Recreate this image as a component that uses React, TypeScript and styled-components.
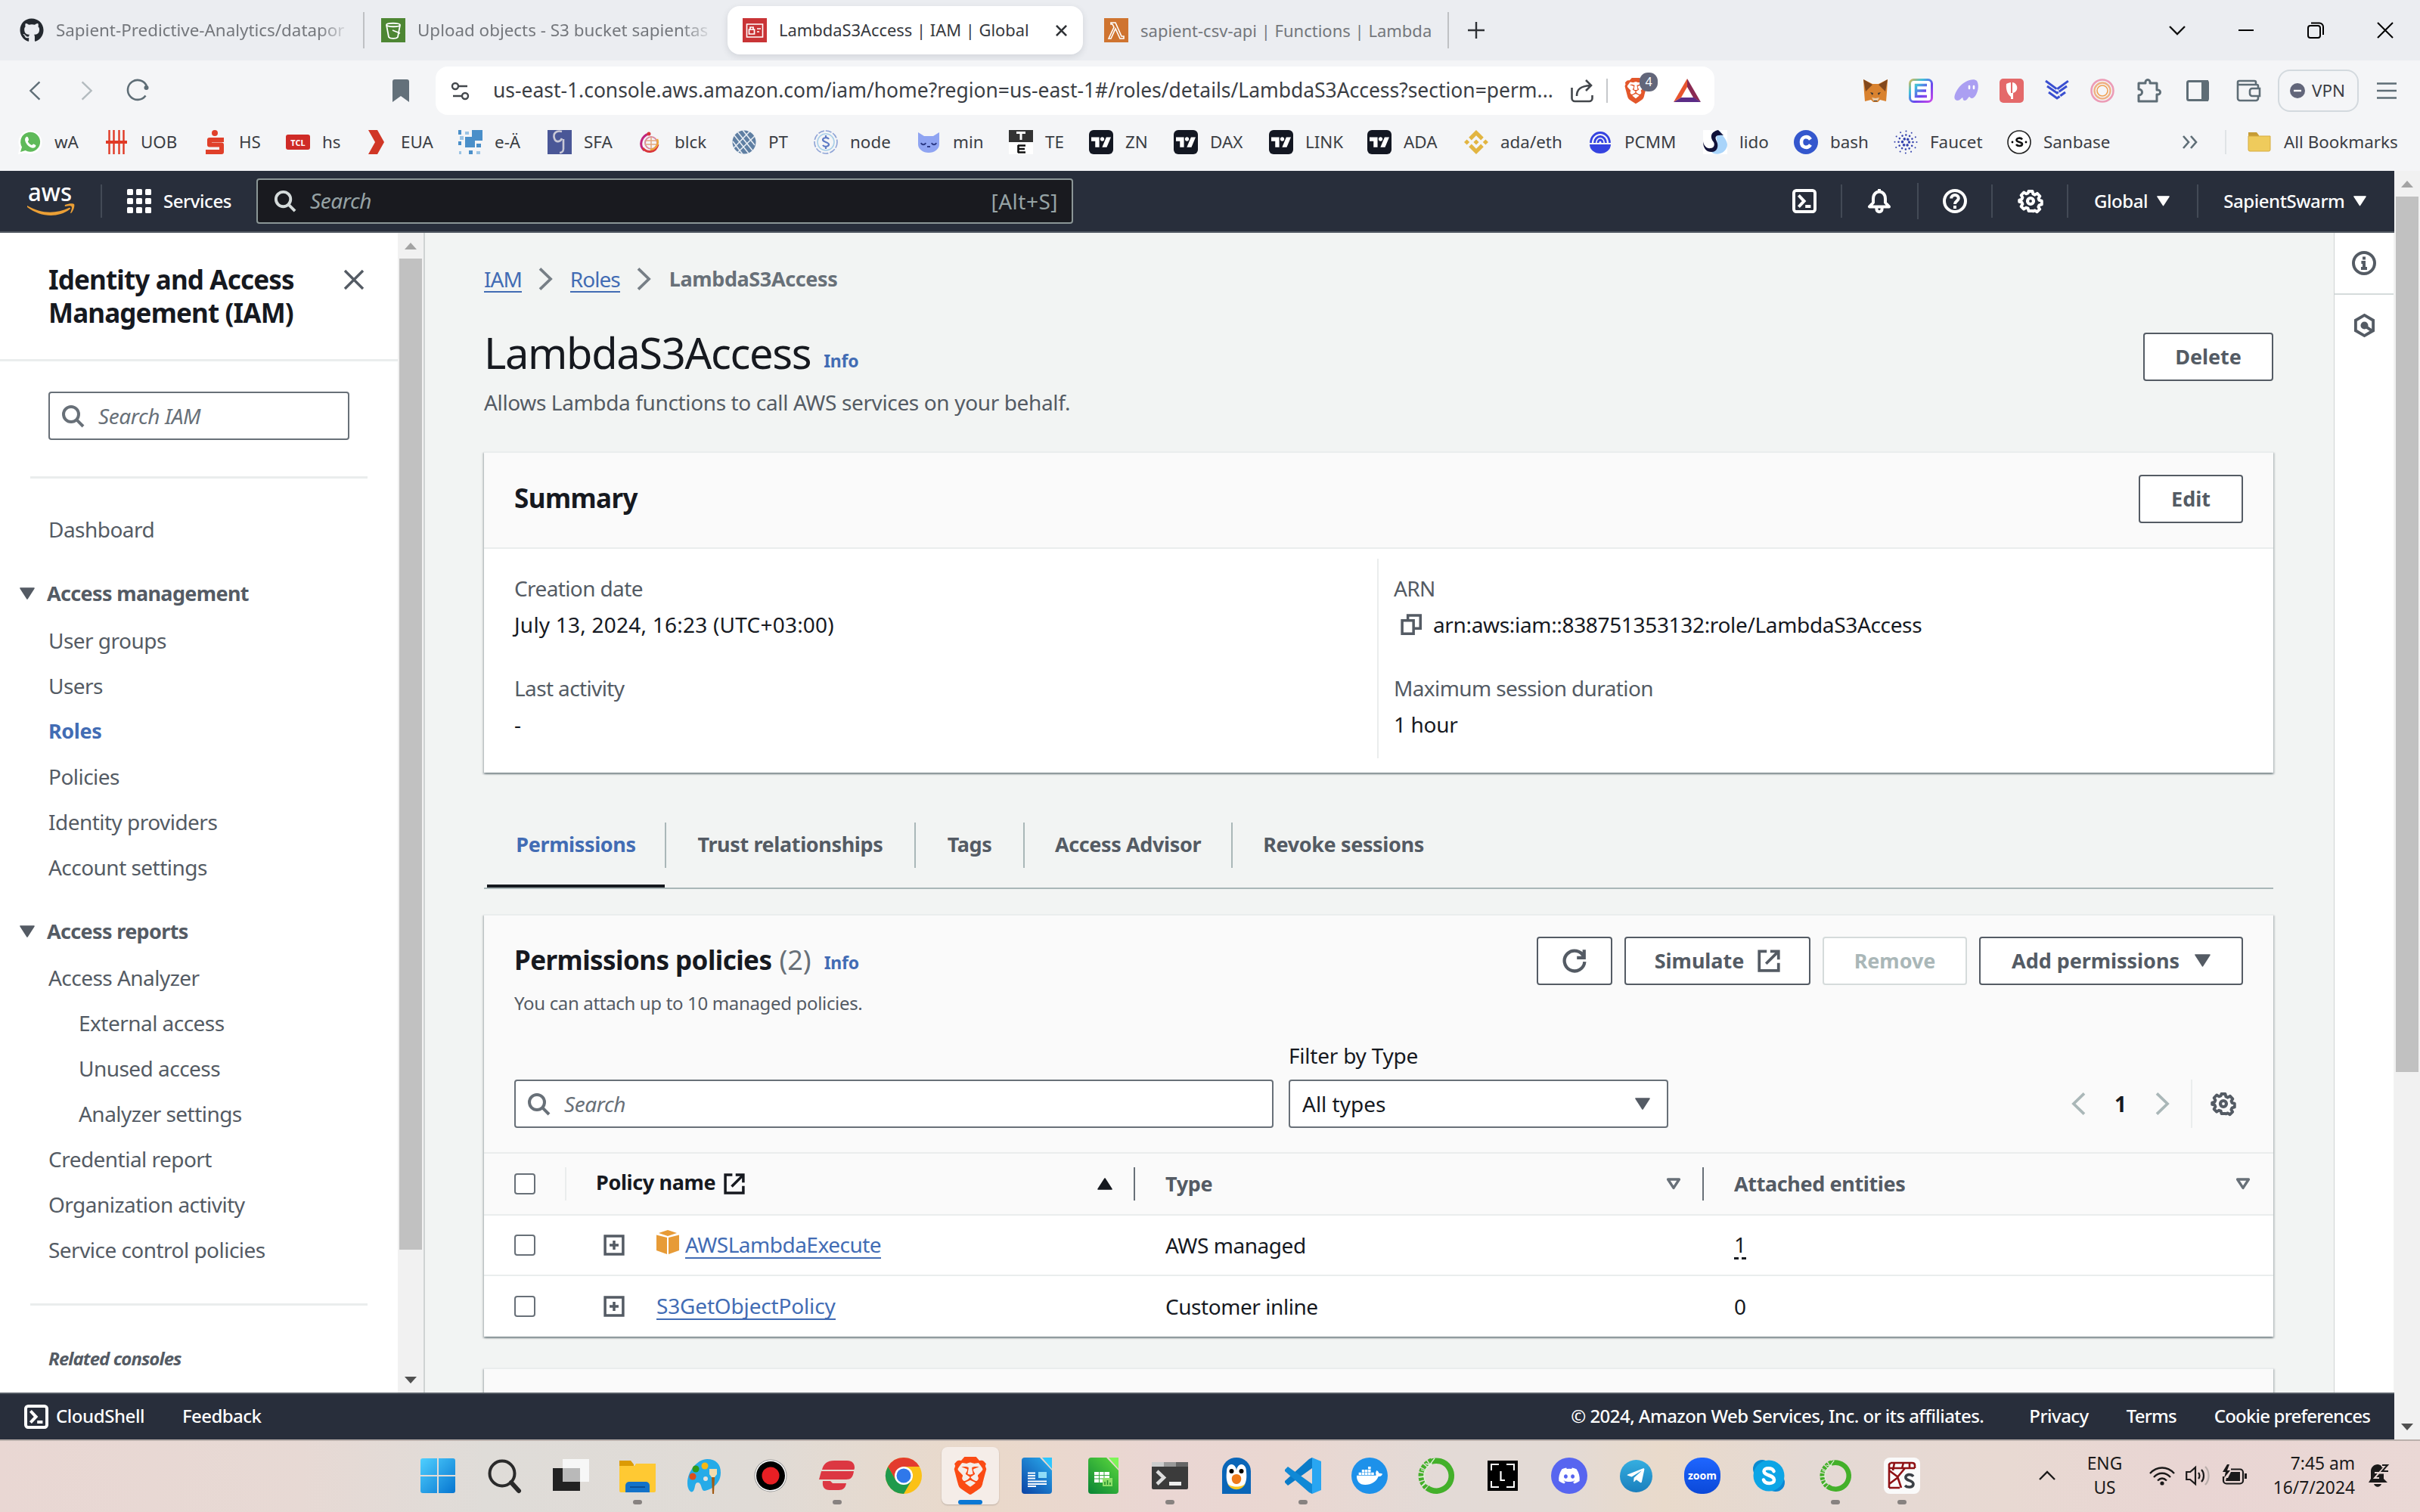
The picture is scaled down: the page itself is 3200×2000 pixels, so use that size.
import React from 'react';
import styled, { createGlobalStyle, css } from 'styled-components';
import { FaGithub, FaDiscord, FaDocker, FaTelegramPlane } from 'react-icons/fa';
import { SiBrave, SiTradingview, SiBinance } from 'react-icons/si';

const ink = '#16191f';
const slate = '#545b64';
const muted = '#687078';
const link = '#426cb4';
const navy = '#282e3b';

const Global = createGlobalStyle`
  *, *::before, *::after { box-sizing: border-box; }
  html, body { margin: 0; padding: 0; background: #f2f4f3; }
  body { font-family: "Noto Sans", "Open Sans", sans-serif; color: ${ink}; font-size: 28px; overflow: hidden; }
`;

const Screen = styled.div`
  width: 3200px; height: 2000px; display: flex; flex-direction: column; overflow: hidden;
`;

/* ---------- shared ---------- */
const bold = css`font-weight: 700; font-size: 27px; letter-spacing: -0.014em;`;
const Svg = styled.svg<{ $w?: number; $h?: number }>`
  width: ${p => p.$w ?? 32}px; height: ${p => p.$h ?? p.$w ?? 32}px; display: block; flex: none; overflow: visible;
`;
const Cell = styled.div<{ $ml?: number; $w?: number; $mb?: number }>`
  flex: none; display: flex; align-items: center; margin-left: ${p => p.$ml ?? 0}px; margin-bottom: ${p => p.$mb ?? 0}px;
  ${p => p.$w && css`width: ${p.$w}px;`}
`;
const Ui = styled.span<{ $size?: number; $color?: string; $ml?: number }>`
  font-size: ${p => p.$size ?? 22.4}px; color: ${p => p.$color ?? '#3b3e44'}; margin-left: ${p => p.$ml ?? 0}px;
  white-space: nowrap; line-height: 1.36; flex: none;
`;
const VLine = styled.i<{ $h: number; $c: string; $ml?: number; $w?: number }>`
  width: ${p => p.$w ?? 2}px; height: ${p => p.$h}px; background: ${p => p.$c}; margin-left: ${p => p.$ml ?? 0}px; flex: none; display: block;
`;

/* ---------- browser tabs ---------- */
const TabBar = styled.div`height: 80px; flex: none; background: #ebedf1; display: flex; align-items: center;`;
const BrowserTab = styled.div<{ $w: number; $pl: number; $active?: boolean }>`
  width: ${p => p.$w}px; height: 64px; padding-left: ${p => p.$pl}px; display: flex; align-items: center; flex: none;
  ${p => p.$active && css`background: #fff; border-radius: 16px; box-shadow: 0 3px 8px rgba(60, 64, 80, 0.14);`}
`;
const TabText = styled.span<{ $w: number; $active?: boolean; $fade?: boolean }>`
  width: ${p => p.$w}px; margin-left: 16px; white-space: nowrap; font-size: ${p => (p.$fade ? 22.4 : p.$active ? 21.9 : 22)}px; flex: none;
  color: ${p => (p.$active ? '#36393e' : '#74777c')}; line-height: 1.4;
  ${p => p.$fade && css`mask-image: linear-gradient(90deg, #000 90%, transparent 101%);`}
`;

/* ---------- toolbar ---------- */
const Toolbar = styled.div`height: 80px; flex: none; background: #f4f5f7; display: flex; align-items: center;`;
const UrlBar = styled.div`
  width: 1691px; height: 64px; border-radius: 16px; background: #fff; margin-left: 35px; padding-left: 20px;
  display: flex; align-items: center; flex: none;
`;
const ShieldWrap = styled.div`position: relative; width: 34px; height: 36px; margin-left: 20px; color: #e3572b; font-size: 36px; display: flex; align-items: center;`;
const ShieldBadge = styled.span`
  position: absolute; left: 22px; top: -6px; width: 24px; height: 25px; border-radius: 11px; background: #62667a; color: #fff;
  font-size: 16px; line-height: 25px; text-align: center;
`;
const Vpn = styled.div`
  width: 107px; height: 56px; border: 2px solid #d3d9de; border-radius: 16px; margin-left: 23px; display: flex; align-items: center;
  padding-left: 14px; flex: none;
`;

/* ---------- bookmarks ---------- */
const Bookmarks = styled.div`height: 66px; flex: none; background: #f4f5f7; display: flex; align-items: flex-start; padding: 6px 0 0 24px;`;
const Bookmark = styled.div<{ $w: number }>`width: ${p => p.$w}px; height: 44px; display: flex; align-items: center; gap: 16px; flex: none;`;

/* ---------- console frame ---------- */
const Page = styled.div`height: 1678px; flex: none; display: flex; overflow: hidden;`;
const Console = styled.div`width: 3166px; flex: none; display: flex; flex-direction: column;`;
const Nav = styled.header`height: 82px; flex: none; background: ${navy}; border-bottom: 2px solid #545b64; display: flex; align-items: center;`;
const NavText = styled.span<{ $ml: number }>`font-size: 24px; letter-spacing: -0.018em; color: #fff; padding-bottom: 2px; margin-left: ${p => p.$ml}px; white-space: nowrap; flex: none; font-weight: 500;`;
const FootText = styled(NavText)<{ $ls?: number }>`letter-spacing: ${p => p.$ls ?? -0.034}em; padding-bottom: 3px;`;
const NavSearch = styled.div`
  width: 1080px; height: 60px; margin-left: 33px; border: 2px solid #8b9696; border-radius: 4px; background: #191a1f; color: #96a3a5;
  display: flex; align-items: center; padding: 0 18px 1px 20px; flex: none; letter-spacing: 0.018em;
`;
const Italic = styled.span<{ $ml?: number }>`font-style: italic; margin-left: ${p => p.$ml ?? 0}px; letter-spacing: -0.014em; padding-bottom: 1px;`;
const Spacer = styled.div`flex: 1;`;
const Middle = styled.div`height: 1534px; flex: none; display: flex; overflow: hidden;`;
const Footer = styled.footer`
  height: 62px; flex: none; background: ${navy}; border-top: 2px solid #545b64; display: flex; align-items: center; padding: 0 32px;
`;

/* ---------- scrollbars ---------- */
const Track = styled.div`
  width: 34px; flex: none; background: #f1f1f1; display: flex; flex-direction: column; align-items: center; padding: 11px 0 10px;
`;
const Thumb = styled.div<{ $h: number }>`width: 30px; height: ${p => p.$h}px; background: #c1c1c1; margin-top: 10px; flex: none;`;

/* ---------- sidebar ---------- */
const Side = styled.aside`width: 526px; flex: none; background: #fff;`;
const SideHead = styled.div`height: 170px; border-bottom: 3px solid #eaeded; padding: 40px 0 0 64px; display: flex; align-items: flex-start;`;
const SideTitle = styled.h2`margin: 0; width: 391px; font-size: 35px; line-height: 44px; font-weight: 700; letter-spacing: -0.024em;`;
const SideSearch = styled.div`padding: 40px 64px 0;`;
const Field = styled.div<{ $w: number }>`
  width: ${p => p.$w}px; height: 64px; border: 2px solid #687078; border-radius: 4px; background: #fff; color: #687078;
  display: flex; align-items: center; padding: 0 22px 0 14px; flex: none; font-size: 28px;
`;
const SideRule = styled.div<{ $mt: number }>`height: 3px; width: 446px; margin: ${p => p.$mt}px 0 0 40px; background: #eaeded;`;
const SideItem = styled.div<{ $deep?: boolean; $on?: boolean; $mt?: number }>`
  height: 60px; line-height: 58px; margin-top: ${p => p.$mt ?? 0}px; padding-left: ${p => (p.$deep ? 104 : 64)}px; font-size: 28px; white-space: nowrap;
  color: ${p => (p.$on ? link : slate)}; letter-spacing: -0.019em;
  ${p => p.$on && bold}
`;
const SideGroup = styled.div<{ $mt: number }>`
  height: 60px; margin-top: ${p => p.$mt}px; padding: 0 0 1px 26px; display: flex; align-items: center; gap: 16px; color: ${slate};
  ${bold} letter-spacing: -0.024em; white-space: nowrap;
`;
const Related = styled.div`margin: 50px 0 0 64px; font-size: 24px; font-weight: 700; font-style: italic; color: ${slate}; letter-spacing: -0.04em; line-height: 40px;`;

/* ---------- main ---------- */
const Main = styled.main`
  width: 2526px; flex: none; background: #f2f4f3; padding: 0 80px 0 78px; border-left: 2px solid #cfd3d3; overflow: hidden;
  display: flex; flex-direction: column;
`;
const Crumbs = styled.nav`height: 60px; margin-top: 31px; display: flex; align-items: center; flex: none; letter-spacing: -0.035em;`;
const CrumbLink = styled.span`color: ${link}; border-bottom: 2px solid ${link}; line-height: 32px; padding-top: 2px;`;
const CrumbHere = styled.span`color: ${muted}; ${bold} letter-spacing: -0.014em; padding-bottom: 1px;`;
const TitleRow = styled.div`height: 88px; margin-top: 24px; display: flex; align-items: center; flex: none;`;
const H1 = styled.h1`margin: 0; font-size: 56px; font-weight: 400; letter-spacing: -0.024em; line-height: 84px; padding-bottom: 3px;`;
const Info = styled.span<{ $mt?: number }>`font-size: 23px; font-weight: 700; color: ${link}; letter-spacing: -0.01em; margin: ${p => p.$mt ?? 0}px 0 0 17px;`;
const Desc = styled.p`margin: 0; height: 40px; line-height: 39px; color: ${slate}; letter-spacing: -0.013em; flex: none; margin-top: 2px;`;
const Button = styled.button<{ $w: number; $off?: boolean; $gap?: number; $mt?: number; $mb?: number }>`
  width: ${p => p.$w}px; height: 64px; border: 2px solid ${p => (p.$off ? '#d5dbdb' : slate)}; border-radius: 4px; background: #fff;
  color: ${p => (p.$off ? '#aab7b8' : slate)}; font-family: "Noto Sans", "Open Sans", sans-serif; ${bold} letter-spacing: -0.002em; padding: 0 0 1px; flex: none;
  display: flex; align-items: center; justify-content: center; gap: ${p => p.$gap ?? 18}px; white-space: nowrap;
  margin-top: ${p => p.$mt ?? 0}px; margin-bottom: ${p => p.$mb ?? 0}px;
`;
const Card = styled.section<{ $h: number; $mt: number }>`
  height: ${p => p.$h}px; margin-top: ${p => p.$mt}px; flex: none; background: #fff; border-top: 2px solid #eaeded; display: flex; flex-direction: column;
  box-shadow: 0 2px 2px rgba(0, 28, 36, 0.3), 2px 2px 2px rgba(0, 28, 36, 0.15), -2px 2px 2px rgba(0, 28, 36, 0.15);
`;
const CardHead = styled.div`height: 127px; flex: none; background: #fafafa; border-bottom: 2px solid #eaeded; display: flex; align-items: center; padding: 0 40px;`;
const H2 = styled.h2<{ $up?: number }>`margin: 0; font-size: 35px; font-weight: 700; letter-spacing: -0.016em; white-space: nowrap; padding-bottom: ${p => p.$up ?? 4}px;`;
const Count = styled.span`font-size: 36px; color: ${muted}; margin-left: 10px; letter-spacing: 0; padding-bottom: 4px;`;
const Columns = styled.div`display: grid; grid-template-columns: 1181px 1fr; padding-top: 13px;`;
const Column = styled.div<{ $line?: boolean }>`
  height: 264px; padding: 15px 0 0 ${p => (p.$line ? 20 : 40)}px; ${p => p.$line && css`border-left: 2px solid #eaeded;`}
`;
const Label = styled.div<{ $mt?: number }>`height: 48px; line-height: 48px; color: ${slate}; letter-spacing: -0.022em; margin-top: ${p => p.$mt ?? 0}px;`;
const Value = styled.div<{ $wide?: boolean }>`height: 48px; line-height: 48px; display: flex; align-items: center; letter-spacing: ${p => (p.$wide ? 0.008 : -0.012)}em;`;

const Tabs = styled.div`height: 94px; margin-top: 60px; border-bottom: 2px solid #aab7b8; display: flex; flex: none; padding-left: 4px;`;
const Tab = styled.div<{ $w: number; $on?: boolean }>`
  width: ${p => p.$w}px; height: 92px; display: flex; align-items: flex-start; justify-content: center;
  border-bottom: 4px solid ${p => (p.$on ? ink : 'transparent')}; color: ${p => (p.$on ? link : slate)}; ${bold} white-space: nowrap;
  line-height: 70px; flex: none;
`;
const TabRule = styled.i`width: 2px; height: 60px; margin-top: 6px; background: #aab7b8; flex: none;`;
const PolicyTop = styled.div`height: 315px; flex: none; background: #fafafa; padding: 28px 40px 0; border-bottom: 2px solid #eaeded; display: flex; flex-direction: column;`;
const Row = styled.div<{ $gap?: number }>`display: flex; align-items: center; gap: ${p => p.$gap ?? 0}px;`;
const Sub = styled.div`font-size: 24px; color: ${slate}; line-height: 40px; letter-spacing: -0.014em; margin-top: 4px;`;
const FilterLabel = styled.div`margin: 30px 0 0 1024px; height: 40px; line-height: 39px; letter-spacing: -0.008em;`;
const Filters = styled.div`height: 64px; margin-top: 11px; display: flex; align-items: center;`;
const Select = styled(Field)`color: ${ink}; padding-left: 16px; padding-bottom: 1px; margin-left: 20px; justify-content: space-between; letter-spacing: 0;`;
const Table = styled.div`display: flex; flex-direction: column;`;
const Tr = styled.div<{ $head?: boolean }>`
  height: ${p => (p.$head ? 82 : 80)}px; background: ${p => (p.$head ? '#fafafa' : '#fff')}; display: grid;
  grid-template-columns: 109px 752px 752px 1fr; align-items: center; border-bottom: 2px solid #eaeded;
  &:last-child { border-bottom: 0; }
`;
const Td = styled.div<{ $pl?: number }>`display: flex; align-items: center; padding-left: ${p => p.$pl ?? 40}px; letter-spacing: -0.016em; white-space: nowrap;`;
const Th = styled(Td)<{ $on?: boolean; $rule?: string }>`
  height: 44px; ${bold} color: ${p => (p.$on ? ink : slate)}; border-right: 2px solid ${p => p.$rule ?? 'transparent'};
`;
const Check = styled.i`width: 28px; height: 28px; border: 2px solid #687078; border-radius: 4px; background: #fff; display: block;`;
const Link = styled.span<{ $ls?: number }>`color: ${link}; border-bottom: 2px solid ${link}; line-height: 34px; letter-spacing: ${p => p.$ls ?? -0.018}em;`;
const Dashed = styled.span`border-bottom: 3px dashed ${ink}; line-height: 34px;`;
const Rail = styled.div`width: 79px; flex: none; background: #fff; display: flex; flex-direction: column; align-items: center; border-left: 1px solid #cfd3d3;`;
const RailBtn = styled.div<{ $h: number; $line?: boolean }>`
  width: 100%; height: ${p => p.$h}px; display: flex; align-items: center; justify-content: center; ${p => p.$line && css`border-bottom: 2px solid #d5dbdb;`}
`;

/* ---------- taskbar ---------- */
const Taskbar = styled.div`
  height: 96px; flex: none; border-top: 2px solid #bab0ac; display: flex; padding-left: 535px;
  background: linear-gradient(90deg, #e9d7d3 0, #e7d9d4 400px, #dfdcd8 640px, #e0dbd6 1000px, #ead9ca 1300px, #ead6d3 1540px, #ead7d1 1700px, #e3dad6 1900px, #e3dad5 2060px, #e9dacb 2200px, #e4d9d4 2400px, #e8d9d2 2650px, #e9d5d3 2900px, #ead8d5 3200px);
`;
const Task = styled.div<{ $on?: boolean }>`
  width: 76px; height: 76px; margin: 8px 6px 0; border-radius: 8px; display: flex; align-items: center; justify-content: center; position: relative; flex: none;
  ${p => p.$on && css`background: #f5ede8; box-shadow: 0 1px 2px rgba(0, 0, 0, 0.2);`}
`;
const Dot = styled.i<{ $on?: boolean }>`
  position: absolute; bottom: 0; left: ${p => (p.$on ? 22 : 32)}px; width: ${p => (p.$on ? 32 : 12)}px; height: 6px; border-radius: 3px; background: ${p => (p.$on ? '#0b78d4' : '#878280')};
`;
const Tray = styled.div`flex: 1; height: 92px; display: flex; align-items: center; color: #1b1a1a;`;
const Stack = styled.div<{ $w: number; $right?: boolean; $ml: number }>`
  width: ${p => p.$w}px; margin-left: ${p => p.$ml}px; display: flex; flex-direction: column; align-items: ${p => (p.$right ? 'flex-end' : 'center')};
  font-size: 22.8px; line-height: 32px; white-space: nowrap; flex: none;
`;
const Round = styled.div<{ $bg: string; $r?: string; $w?: number; $h?: number; $fs?: number }>`
  width: ${p => p.$w ?? 48}px; height: ${p => p.$h ?? p.$w ?? 48}px; border-radius: ${p => p.$r ?? '50%'}; background: ${p => p.$bg}; color: #fff; flex: none;
  display: flex; align-items: center; justify-content: center; font-size: ${p => p.$fs ?? 32}px; font-weight: 700; line-height: 1; overflow: hidden;
`;

/* ---------- icons ---------- */
const Stroke = ({ w = 32, c = slate, sw = 2, children }: { w?: number; c?: string; sw?: number; children: React.ReactNode }) => (
  <Svg $w={w} viewBox="0 0 16 16" fill="none" stroke={c} strokeWidth={sw}>{children}</Svg>
);
const Mag = ({ c = '#687078', w = 32 }) => <Stroke c={c} w={w}><circle cx="7" cy="7" r="5" /><path d="M10.6 10.6 15 15" /></Stroke>;
const Caret = ({ w = 20, c = slate, up = false, hollow = false }) => (
  <Svg $w={w} $h={w * 0.8} viewBox="0 0 20 16" fill={hollow ? 'none' : c} stroke={c} strokeWidth={hollow ? 3.4 : 1.6} strokeLinejoin="round">
    {up ? <path d="M10 1 19 15H1Z" /> : hollow ? <path d="M2.6 2h14.8L10 13.4Z" /> : <path d="M1 1h18L10 15Z" />}
  </Svg>
);
const ScrollTri = ({ up = false, c }: { up?: boolean; c: string }) => (
  <Svg $w={16} $h={13} viewBox="0 0 16 13" fill={c}>{up ? <path d="M8 2 16 11H0Z" /> : <path d="M0 2h16L8 11Z" />}</Svg>
);
const Gear = ({ c = slate }) => (
  <Stroke c={c} w={32} sw={2.1}>
    <path strokeLinejoin="round" d="M6.6 1h2.8l.4 1.9 1.3.6 1.7-1 1.9 2-1 1.6.5 1.3 1.8.4v2.6l-1.8.5-.6 1.3 1 1.6-1.9 1.9-1.6-1-1.3.5L9.4 15H6.6l-.4-1.8-1.3-.5-1.7 1-1.9-1.9 1-1.6-.5-1.3L0 8.5V7.2l1.8-.5.5-1.3-1-1.6 1.9-2 1.7 1 1.3-.5Z" transform="translate(.6 .6) scale(.925)" />
    <circle cx="8" cy="8" r="2" />
  </Stroke>
);
const Shell = () => <Stroke c="#fff" w={32}><rect x="1" y="1" width="14" height="14" rx="1.6" /><path d="m4.2 4.2 3.6 3.8-3.6 3.8M8.6 11.5h3.6" /></Stroke>;
const External = ({ c = slate, w = 30 }) => <Stroke c={c} w={w}><path d="M6.500 1.200H1.200v13.600h13.600V9.500M9 1.200h5.800V7M14.500 1.500 6 10" /></Stroke>;
const Plus = () => <Stroke w={28}><path d="M1.2 1.2h13.6v13.6H1.2zM8 4.6v6.8M4.6 8h6.8" /></Stroke>;
const Cube = () => (
  <Svg $w={30} $h={32} viewBox="0 0 30 32">
    <path fill="#e79b37" d="M0 6.500 14 10v22L0 27ZM30 6.500 16 10v22l14-5Z" /><path fill="#e79b37" d="M15 0 27 4 15 8 3 4Z" />
  </Svg>
);
const Chev = ({ left = false, c = '#777f86', w = 20, h = 32, sw = 4 }) => (
  <Svg $w={w} $h={h} viewBox="0 0 20 32" fill="none" stroke={c} strokeWidth={sw}>{left ? <path d="M18 1.500 3 16l15 14.500" /> : <path d="m2 1.500 15 14.500L2 30.500" />}</Svg>
);
const Anaconda = ({ w = 48 }) => (
  <Svg $w={w} viewBox="0 0 48 48" fill="none">
    <path d="M16 6a20 20 0 1 1-4 34" stroke="#43b02a" strokeWidth="7.500" /><path d="M18 4C4 10-2 28 12 41" stroke="#43b02a" strokeWidth="7" strokeDasharray="4 1.600" />
    <path d="M19 8C9 12 4 24 12 36M22 1 13 13M10 8l8 2M4 16l8 3M1 26l8-1M5 38l6-7" stroke="#dff0d8" strokeWidth="1.300" />
  </Svg>
);

const bookmarks: { t: string; w: number; i: React.ReactNode }[] = [
  { t: 'wA', w: 114, i: <Svg viewBox="0 0 32 32"><path fill="#fff" d="M0 32 2 23A15.500 15.500 0 1 1 9 30Z" /><path fill="#5fba5a" d="M3 29 5 22.500A13 13 0 1 1 9.600 27Z" /><path fill="#fff" d="M11 9c2-1 3 3 3 4s-1.500 1.500-1 2.500c1 2 3 4 5 4.500 1 0 1.500-2 2.500-1.500 3 1.500 3.500 1.500 2.500 3.500-2 3-7 1.500-10-1.500S7 11.500 11 9Z" /></Svg> },
  { t: 'UOB', w: 130, i: <Svg viewBox="0 0 32 32" stroke="#e03a26" strokeWidth="2.400"><path d="M6.500 0v32M12.500 0v32M19.500 0v32M25.500 0v32" /><path d="M2 16h28" strokeWidth="4" /></Svg> },
  { t: 'HS', w: 110, i: <Svg viewBox="0 0 32 32"><circle cx="16" cy="4" r="4" fill="#e0402a" /><path d="M28 13H9v6.500h16V29H4" fill="none" stroke="#e0402a" strokeWidth="6" strokeLinejoin="round" /></Svg> },
  { t: 'hs', w: 104, i: <Round $bg="#cf2b27" $r="3px" $w={32} $h={20} $fs={11}>TCL</Round> },
  { t: 'EUA', w: 124, i: <Svg viewBox="0 0 32 32"><path fill="#d03626" d="M5 0h12l9 16-9 16H5l9-16Z" /></Svg> },
  { t: 'e-Ä', w: 118, i: <Svg viewBox="0 0 32 32" fill="#4a8fc9"><path d="M18 0h14v14H22V9h-4zM9 9h13v14H9z" /><path d="M0 0h4v6H0zM0 15h4v5H0zM24 18h6v5h-6zM14 27h5v5h-5z" /><path fill="#9cc4e4" d="M9 2h5v4H9zM2 8h5v5H2zM24 28h5v4h-5zM1 28h3v4H1z" /></Svg> },
  { t: 'SFA', w: 120, i: <Svg viewBox="0 0 32 32"><path fill="#4a5797" d="M0 0h32v32H0z" /><path d="M19 2c-8-2-12 3-10 9s8 5 10 0M21 12v13c0 4-3 5-5 5" fill="none" stroke="#c9c8d6" strokeWidth="2.600" /></Svg> },
  { t: 'blck', w: 124, i: <Svg viewBox="0 0 32 32" fill="none"><circle cx="17" cy="17" r="8" stroke="#d98a9f" strokeWidth="2" /><path d="M17 9v16M10 14h14M9 19h15" stroke="#e2a67f" strokeWidth="1.500" /><path d="M14 5C4 8 0 20 8 27" stroke="#c0257e" strokeWidth="3" /><path d="M6 24c6 7 17 6 20-5" stroke="#d9363b" strokeWidth="3" /><path d="M25 12c3 7-3 14-9 14" stroke="#eda73b" strokeWidth="2.500" /><circle cx="14" cy="5" r="2.500" fill="#d9363b" /></Svg> },
  { t: 'PT', w: 108, i: <Svg viewBox="0 0 32 32"><circle cx="16" cy="16" r="15.500" fill="#5f7fa3" /><path d="M3 7 22 31M7 2l20 25M14 0l16 20M1 15l13 17M2 24 24 1M7 30 30 8" stroke="#e8edf3" strokeWidth="1.600" /></Svg> },
  { t: 'node', w: 136, i: <Svg viewBox="0 0 32 32" fill="none" stroke="#8ea3d6" strokeWidth="1.600"><circle cx="16" cy="16" r="15" strokeDasharray="8 2" /><circle cx="16" cy="16" r="11" stroke="#a9cfe8" /><path d="M20 12c-2-3-8-2-8 1s8 3 8 6-6 4-8 1M16 7v3M16 22v3" stroke="#5c79c4" strokeWidth="2.200" /></Svg> },
  { t: 'min', w: 122, i: <Svg viewBox="0 0 32 32"><path fill="#8fa4f2" d="M2 3 10 8h12l8-5v16a14 11 0 0 1-28 0Z" /><path d="M6 17c1 3 5 3 6 0M20 17c1 3 5 3 6 0M14 22h4" fill="none" stroke="#2c3a86" strokeWidth="2" /></Svg> },
  { t: 'TE', w: 106, i: <Svg viewBox="0 0 32 32"><path fill="#333" d="M0 0h32v16H0z" /><path fill="#fff" d="M0 16h32v16H0z" /><path stroke="#fff" strokeWidth="3" d="M10 3.500h12M16 3v10" /><path stroke="#111" strokeWidth="2.600" fill="none" d="M22 20.500H12M22 29.500H12M21 25h-9M12.500 20v10" /></Svg> },
  ...[['ZN', 112], ['DAX', 126], ['LINK', 130], ['ADA', 128]].map(([t, w]) => ({ t: t as string, w: w as number, i: <Round $bg="#131722" $r="6px" $w={32} $fs={26}><SiTradingview /></Round> })),
  { t: 'ada/eth', w: 164, i: <Round $bg="transparent" $r="0" $w={32} $fs={32}><SiBinance color="#e2b541" /></Round> },
  { t: 'PCMM', w: 152, i: <Svg viewBox="0 0 32 32"><path fill="#3543e0" d="M2 19h28a14 12 0 0 1-28 0Z" /><path d="M3.500 17a12.500 13.500 0 0 1 25 0M8.500 17a7.500 8.500 0 0 1 15 0M13 17a3 4 0 0 1 6 0" fill="none" stroke="#3543e0" strokeWidth="2.800" /></Svg> },
  { t: 'lido', w: 120, i: <Svg viewBox="0 0 32 32"><path fill="#fff" d="M0 0h32v32H0z" /><path fill="#a9d4fa" d="M19 3c-4 10 2 10-2 18s-8 8-3 10c8 3 18-3 18-12C31 12 27 10 22 1Z" /><path fill="#11123a" d="M20 0c-12 3-10 11-6 16 2 4 0 8-4 8C5 25 1 21 0 15c0 10 5 14 11 14 8 0 10-8 7-14S16 6 27 7Z" /></Svg> },
  { t: 'bash', w: 132, i: <Svg viewBox="0 0 32 32"><circle cx="16" cy="16" r="16" fill="#3457cd" /><path d="M22 12.500c-4-6-12-3.500-12 3.500s8 9.500 12 3.500" fill="none" stroke="#fff" strokeWidth="4.600" /></Svg> },
  { t: 'Faucet', w: 150, i: <Svg viewBox="0 0 32 32" fill="none" stroke="#3644ad" strokeLinecap="round"><circle cx="16" cy="16" r="4.500" strokeWidth="3.600" strokeDasharray="0.010 4.700" /><circle cx="16" cy="16" r="9.500" strokeWidth="2.600" strokeDasharray="0.010 4.970" /><circle cx="16" cy="16" r="14.500" strokeWidth="2" strokeDasharray="0.010 7.590" /></Svg> },
  { t: 'Sanbase', w: 231, i: <Svg viewBox="0 0 32 32"><circle cx="16" cy="16" r="15" fill="#fff" stroke="#222" strokeWidth="1.600" /><path d="M20 12.500c-2-3-8-2-7.500 1s7.500 2 7.500 5-6 3.500-8 .5" fill="none" stroke="#111" strokeWidth="2.600" /><circle cx="7" cy="16" r="1.400" /><circle cx="25" cy="16" r="1.400" /></Svg> },
];

const tools: React.ReactNode[] = [
  <Svg viewBox="0 0 32 32" key="fox"><path fill="#d9822f" d="M0 1 12 7h8L32 1l-1 17-1 12-8-2-3 3h-6l-3-3-8 2-1-12Z" /><path fill="#82481d" d="m0 1 12 7-9 9ZM32 1 20 8l9 9Z" /><path fill="#333" d="M9 18l4 1-1 3ZM23 18l-4 1 1 3ZM13 27h6l-1 3h-4Z" /><path fill="#e9c9a5" d="m11 25 2 4h6l2-4-5 1Z" /></Svg>,
  <Svg viewBox="0 0 32 32" key="e"><defs><linearGradient id="rb" gradientUnits="userSpaceOnUse" x1="0" y1="0" x2="32" y2="32"><stop offset="0" stopColor="#eeb83e" /><stop offset=".3" stopColor="#3fc0dc" /><stop offset=".6" stopColor="#6b46ee" /><stop offset="1" stopColor="#d747e8" /></linearGradient></defs><rect x="1.500" y="1.500" width="29" height="29" rx="5" fill="#fff" stroke="url(#rb)" strokeWidth="3" /><path d="M24 8.500H9.500v15H24M11 16h12" fill="none" stroke="url(#rb)" strokeWidth="3.500" /></Svg>,
  <Svg viewBox="0 0 32 32" key="gh"><path fill="#ab9ff2" d="M30 3c4 6 1 18-4 22-4 3-5-1-6-1s-3 5-6 5-2-4-3-4-3 4-7 4C-2 28 0 20 6 12 14 2 26-1 30 3Z" /><path stroke="#fff" strokeWidth="2.600" strokeLinecap="round" d="M20 10v3M26 10v3" /></Svg>,
  <Round key="p" $bg="#e4696a" $r="5px" $w={32}><Svg viewBox="0 0 32 32"><path fill="#fff" d="M15 5v19C11 21 8 15 9 7c2-1 4-2 6-2Zm2 0c8 1 9 13 0 14Zm-2 14h3v8h-3Z" /></Svg></Round>,
  <Svg viewBox="0 0 32 32" key="v" fill="none" stroke="#3a4fd0" strokeWidth="3"><path d="M1 3 16 14 31 3M3 10l13 9 13-9M5 18l11 8 11-8" strokeDasharray="18 1" /></Svg>,
  <Svg viewBox="0 0 32 32" key="c" fill="none"><circle cx="16" cy="16" r="14.500" stroke="#ec9bb6" strokeWidth="2.600" /><circle cx="16" cy="16" r="10.500" stroke="#efb184" strokeWidth="2.400" /><circle cx="16" cy="16" r="7" stroke="#f0a050" strokeWidth="1.600" /></Svg>,
];

const Penguin = () => (
  <Svg $w={38} $h={48} viewBox="0 0 38 48"><path fill="#0a66b8" d="M0 48V18a19 18 0 0 1 38 0v30Z" /><path fill="#fff" d="M6 19a6.500 9 0 0 1 13-2 6.500 9 0 0 1 13 2c1 10 0 22-13 22S5 29 6 19Z" /><path fill="#f7c51e" d="M7 34c5 11 19 11 24 0-4 6-20 6-24 0Z" /><circle cx="12.500" cy="18" r="3" /><circle cx="25.500" cy="18" r="3" /><path fill="#ef7a1a" d="M19 22c5 0 7 4 6 8s-4 5-6 5-5-1-6-5 1-8 6-8Z" /></Svg>
);
const LibreDoc = ({ a, b, hi, sheet }: { a: string; b: string; hi: string; sheet?: boolean }) => (
  <Svg $w={40} $h={48} viewBox="0 0 40 48">
    <defs><linearGradient id={sheet ? 'ls' : 'lw'} x1="0" y1="1" x2=".8" y2="0"><stop offset="0" stopColor={a} /><stop offset="1" stopColor={b} /></linearGradient></defs>
    <path fill={`url(#${sheet ? 'ls' : 'lw'})`} d="M4 0h20l16 17v27a4 4 0 0 1-4 4H4a4 4 0 0 1-4-4V4a4 4 0 0 1 4-4Z" /><path fill={hi} d="M27 0h13v15Z" />
    {sheet ? <><path fill="#fff" d="M8 19h20v14H8z" /><path stroke="#37a93c" d="M8 23.500h20M8 28h20M14.500 19v14M21 19v14" /><path fill="#8ee06a" d="M19 27h13v11H19z" /><path stroke="#1f8a2c" strokeWidth="1.500" d="M22 36v-4M25.500 36v-6M29 36v-3" /></> : <><path stroke="#fff" strokeWidth="2" d="M8 20.500h10M8 24h10M8 27.500h10M8 31.500h25M8 35h25M8 38h11" /><path fill="#8fdcf7" d="M22 19h11v8H22z" /></>}
  </Svg>
);

const tasks: { i: React.ReactNode; dot?: boolean; on?: boolean }[] = [
  { i: <Svg $w={46} viewBox="0 0 46 46"><defs><linearGradient id="win" x1="0" y1="0" x2="1" y2="1"><stop offset="0" stopColor="#4fd0ff" /><stop offset="1" stopColor="#0675d0" /></linearGradient></defs><path fill="url(#win)" d="M3 0h19v22H0V3a3 3 0 0 1 3-3Zm21 0h19a3 3 0 0 1 3 3v19H24ZM0 24h22v22H3a3 3 0 0 1-3-3Zm24 0h22v19a3 3 0 0 1-3 3H24Z" /></Svg> },
  { i: <Svg $w={44} viewBox="0 0 44 44" fill="none" stroke="#2a2a2a"><circle cx="19" cy="19" r="16.500" strokeWidth="4" /><path d="m31 31 10 11" strokeWidth="6" strokeLinecap="round" /></Svg> },
  { i: <Svg $w={48} viewBox="0 0 48 48"><path fill="#222" d="M0 14h36v30H0z" /><path fill="#f7f7f7" d="M13 2h35v30H13z" /><path fill="#b9b9b9" d="M13 14h23v18H13z" /></Svg> },
  { i: <Svg $w={48} viewBox="0 0 48 48"><path fill="#dc9b04" d="M0 4h15l4 5v8H0z" /><path fill="#ffc933" d="M0 11h20l2-3h26v36a2 2 0 0 1-2 2H2a2 2 0 0 1-2-2Z" /><path fill="#1272c9" d="M8 46V37a5 5 0 0 1 5-5h22a5 5 0 0 1 5 5v9Z" /><path fill="#0a4f96" d="M14 38h20v2H14z" /></Svg>, dot: true },
  { i: <Svg $w={48} viewBox="0 0 48 48"><path fill="#26abe8" d="M28 2C16 2 2 17 2 34c0 9 5 14 8 10 3-5 1-11 6-11s4 11 8 11 22-6 22-24C46 9 40 2 28 2Z" /><circle cx="13" cy="15" r="4.500" fill="#2f9a1a" /><circle cx="25" cy="11" r="4.500" fill="#f7b912" /><circle cx="9" cy="25" r="4.500" fill="#dc4e1c" /><circle cx="26" cy="28" r="3" fill="#e6e2dd" /><path fill="#f2dcae" d="M31 15h10v7l-3 4h-4l-3-4Z" /><path fill="#a35b13" d="M34 26h4l-1 22h-2Z" /></Svg> },
  { i: <Svg $w={44} viewBox="0 0 44 44"><circle cx="22" cy="22" r="21.500" fill="#999" /><circle cx="22" cy="22" r="20.500" fill="#fff" /><circle cx="22" cy="22" r="19" fill="#000" /><circle cx="22" cy="22" r="11.500" fill="#e81f24" /></Svg> },
  { i: <Svg $w={48} viewBox="0 0 48 48" fill="#dc3742"><path d="M4 16C6 8 11 4 20 4h17c7 0 10 4 10 9 0 3-1 3-1 3ZM3 18h43c-1 8-4 11-10 11H0ZM5 31h10l3 3h18c-1 6-4 9-10 9H14c-7 0-10-4-9-12Z" /></Svg>, dot: true },
  { i: <Svg $w={48} viewBox="0 0 48 48"><circle cx="24" cy="24" r="24" fill="#fbc116" /><path fill="#e33b2e" d="M3.200 12A24 24 0 0 1 44.800 12H24L13.600 30Z" /><path fill="#1f9a4c" d="M3.200 12A24 24 0 0 0 24 48L34.400 30 24 34 13.600 30Z" /><circle cx="24" cy="24" r="12" fill="#fff" /><circle cx="24" cy="24" r="9.500" fill="#2f78ea" /></Svg> },
  { i: <Round $bg="transparent" $r="0" $w={50} $fs={50}><SiBrave color="#fb4b14" /></Round>, on: true },
  { i: <LibreDoc a="#0b43a5" b="#28a5e8" hi="#2ec6ff" /> },
  { i: <LibreDoc a="#088435" b="#55d23c" hi="#7df557" sheet /> },
  { i: <Svg $w={48} viewBox="0 0 48 48"><path fill="#3b3b3b" d="M0 6h48v34a2 2 0 0 1-2 2H2a2 2 0 0 1-2-2Z" /><path fill="#ccc" d="M0 6h16v6H0z" /><path fill="#999" d="M16 6h16v6H16z" /><path fill="#666" d="M32 6h16v6H32z" /><path d="m7 18 9 8.500L7 35" fill="none" stroke="#ddd" strokeWidth="4.500" /><path fill="#eee" d="M23 32h16v5H23z" /></Svg>, dot: true },
  { i: <Penguin /> },
  { i: <Svg $w={48} viewBox="0 0 48 48"><path fill="#0a7bc8" d="M36 0v14L4 37 0 33v-2L32 2Z" /><path fill="#1089d6" d="M0 16l4-4 32 23v13L32 46 0 18Z" /><path fill="#29a6f2" d="M36 0 48 5v38l-12 5Z" /></Svg>, dot: true },
  { i: <Round $bg="#1d91ea" $fs={34}><FaDocker /></Round> },
  { i: <Anaconda /> },
  { i: <Svg $w={40} viewBox="0 0 40 40"><path d="M0 0h40v40H0z" /><path fill="none" stroke="#fff" strokeWidth="2" d="M5 13V5h10M25 5h10v8M35 27v8H25M15 35H5v-8" /><path fill="none" stroke="#fff" strokeWidth="2.200" d="M17.500 14v12H23" /></Svg> },
  { i: <Round $bg="#5765f0" $fs={30}><FaDiscord /></Round> },
  { i: <Round $bg="linear-gradient(#35aee0,#1a7fbd)" $w={43} $fs={26}><FaTelegramPlane /></Round> },
  { i: <Round $bg="linear-gradient(#1f66ff,#0a48d8)" $r="22px" $fs={14}>zoom</Round> },
  { i: <Svg $w={44} viewBox="0 0 44 44"><circle cx="13" cy="13" r="12" fill="#0a8ad0" /><circle cx="31" cy="31" r="12" fill="#0a86d4" /><circle cx="22" cy="22" r="20.500" fill="#0ca5e6" /><path d="M28.500 16c-2-5-13-5-13 0 0 6 13.500 5 13.500 11.500 0 6-12 6-14 0" fill="none" stroke="#fff" strokeWidth="4.600" strokeLinecap="round" /></Svg> },
  { i: <Anaconda w={42} />, dot: true },
  { i: <Svg $w={48} viewBox="0 0 48 48"><rect width="48" height="48" rx="8" fill="#fafafa" /><path d="M9 7h28c3 0 4 1 4 3v4M7 40V9l2-2M7 40h14M7 14h34M14 7l-2 10M26 7l-2 7M7 17l12 9M28 14l-10 12M18 25l5 15M34 7v7M7 35l12-9" fill="none" stroke="#8f1114" strokeWidth="2.600" /><path d="M39 25c-3-4-11-3-10 2 1 4 10 3 10 8 0 5-8 5-11 2" fill="none" stroke="#3a3f45" strokeWidth="3.600" /></Svg>, dot: true },
];

const nav1 = ['User groups', 'Users', 'Roles', 'Policies', 'Identity providers', 'Account settings'];
const nav2: [string, boolean?][] = [['Access Analyzer'], ['External access', true], ['Unused access', true], ['Analyzer settings', true], ['Credential report'], ['Organization activity'], ['Service control policies']];

export default function App() {
  return (
    <Screen>
      <Global />
      <TabBar>
        <BrowserTab $w={480} $pl={26}><FaGithub size={32} color="#24292f" /><TabText $w={386} $fade>Sapient-Predictive-Analytics/datapor</TabText></BrowserTab>
        <VLine $h={48} $c="#bfc1c4" />
        <BrowserTab $w={480} $pl={22}>
          <Svg viewBox="0 0 32 32"><path fill="#4d8633" d="M0 0h32v32H0z" /><path d="M7 9c0-3 18-3 18 0s-18 3-18 0l3 16c2 2.500 10 2.500 12 0l3-16M15 16l10 4" fill="none" stroke="#fff" strokeWidth="1.800" /></Svg>
          <TabText $w={388} $fade>Upload objects - S3 bucket sapientas</TabText>
        </BrowserTab>
        <BrowserTab $w={470} $pl={20} $active>
          <Svg viewBox="0 0 32 32"><path fill="#c93436" d="M0 0h32v32H0z" /><path d="M5.500 8h21v17h-21z" fill="none" stroke="#fff" strokeWidth="1.600" /><path d="M8.500 15h7v6h-7zM10 15v-3h4v3M19 14h5M19 18h3" fill="none" stroke="#fff" strokeWidth="1.700" /></Svg>
          <TabText $w={366} $active>LambdaS3Access | IAM | Global</TabText>
          <Svg $w={15} viewBox="0 0 16 16" stroke="#2f3236" strokeWidth="2.800"><path d="m1 1 14 14M15 1 1 15" /></Svg>
        </BrowserTab>
        <BrowserTab $w={482} $pl={28}>
          <Svg viewBox="0 0 32 32"><path fill="#cf7430" d="M0 0h32v32H0z" /><path d="M9 6h6l8 18h3v3h-5l-6-13-6 13H6l7-15-2-4H9Z" fill="none" stroke="#fff" strokeWidth="1.600" /></Svg>
          <TabText $w={390}>sapient-csv-api | Functions | Lambda</TabText>
        </BrowserTab>
        <VLine $h={48} $c="#bfc1c4" />
        <Cell $ml={25}><Svg $w={22} viewBox="0 0 22 22" stroke="#2f3236" strokeWidth="2.400"><path d="M11 0v22M0 11h22" /></Svg></Cell>
        <Cell $ml={905}><Svg $w={22} viewBox="0 0 22 22" fill="none" stroke="#111" strokeWidth="2.400"><path d="m1 6 10 10L21 6" /></Svg></Cell>
        <Cell $ml={70}><Svg $w={20} viewBox="0 0 20 20" stroke="#000" strokeWidth="2"><path d="M0 10h20" /></Svg></Cell>
        <Cell $ml={71}><Svg $w={22} viewBox="0 0 22 22" fill="none" stroke="#000" strokeWidth="2"><rect x="1" y="5" width="16" height="16" rx="3" /><path d="M5 1.500h11a5 5 0 0 1 5 5V17" /></Svg></Cell>
        <Cell $ml={71}><Svg $w={20} viewBox="0 0 20 20" stroke="#000" strokeWidth="2"><path d="m0 0 20 20M20 0 0 20" /></Svg></Cell>
      </TabBar>

      <Toolbar>
        <Cell $ml={38}><Chev left c="#5e6d76" w={16} h={28} sw={3} /></Cell>
        <Cell $ml={53}><Chev c="#b3bbbf" w={16} h={28} sw={3} /></Cell>
        <Cell $ml={45}><Svg $w={30} viewBox="0 0 30 30" fill="none" stroke="#5e6d76" strokeWidth="2.600"><path d="M24.500 21.500A13 13 0 1 1 26 9" /><circle cx="25.500" cy="11" r="3" fill="#5e6d76" stroke="none" /></Svg></Cell>
        <Cell $ml={321}><Svg $w={22} $h={30} viewBox="0 0 22 30"><path fill="#63707a" d="M3 0h16a3 3 0 0 1 3 3v27l-11-8-11 8V3a3 3 0 0 1 3-3Z" /></Svg></Cell>
        <UrlBar>
          <Svg $w={25} viewBox="0 0 25 25" fill="none" stroke="#43474c" strokeWidth="2.400"><circle cx="6" cy="6" r="4" /><path d="M11 6h11M3 19h11" /><circle cx="19" cy="19" r="4" /></Svg>
          <Cell $ml={31} $w={1404}><Ui $size={26.45}>us-east-1.console.aws.amazon.com/iam/home?region=us-east-1#/roles/details/LambdaS3Access?section=perm...</Ui></Cell>
          <Cell $ml={21}><Svg $w={30} viewBox="0 0 30 30" fill="none" stroke="#43474c" strokeWidth="2.600"><path d="M1.500 11v14a4 4 0 0 0 4 4h19a4 4 0 0 0 4-4v-4" /><path d="M8 22c0-9 5-13 18-14M20 1l7 7-7 7" /></Svg></Cell>
          <VLine $h={32} $c="#c6c8cb" $ml={17} />
          <ShieldWrap><SiBrave /><ShieldBadge>4</ShieldBadge></ShieldWrap>
          <Cell $ml={33}><Svg $w={36} $h={32} viewBox="0 0 36 32"><path fill="#e8552f" d="M18 0 0 31l10-6 8-14Z" /><path fill="#8a2a52" d="m18 0 18 31-10-6-8-14Z" /><path fill="#5b2c86" d="M0 31h36l-9-6H10Z" /></Svg></Cell>
        </UrlBar>
        <Cell $ml={197} />
        {tools.map((t, i) => <Cell key={i} $w={60}>{t}</Cell>)}
        <Cell $ml={2}><Svg $w={32} viewBox="0 0 32 32" fill="none" stroke="#5e6d76" strokeWidth="3"><path strokeLinejoin="round" d="M2 6h9c-1-6 7-6 6 0h9v9c6-1 6 7 0 6v9H2v-8c6 0 6-8 0-8Z" /></Svg></Cell>
        <Cell $ml={33}><Svg $w={30} $h={28} viewBox="0 0 30 28"><rect x="1.500" y="1.500" width="27" height="25" rx="2" fill="none" stroke="#5e6d76" strokeWidth="3" /><path fill="#5e6d76" d="M20 0h9v28h-9z" /></Svg></Cell>
        <Cell $ml={37}><Svg $w={31} $h={28} viewBox="0 0 31 28" fill="none" stroke="#5e6d76" strokeWidth="2.600"><path d="M25 6V3a2 2 0 0 0-2-2H3a2 2 0 0 0-2 2v21a3 3 0 0 0 3 3h21a3 3 0 0 0 3-3v-2M1 6h25a2 2 0 0 1 2 2v3" /><path d="M30 11H20a3 3 0 0 0-3 3v4a3 3 0 0 0 3 3h10Z" /></Svg></Cell>
        <Vpn><Svg $w={20} viewBox="0 0 20 20"><circle cx="10" cy="10" r="10" fill="#62667a" /><path stroke="#fff" strokeWidth="2.400" d="M5 10h10" /></Svg><Ui $ml={9}>VPN</Ui></Vpn>
        <Cell $ml={24}><Svg $w={26} $h={22} viewBox="0 0 26 22" stroke="#5e6d76" strokeWidth="2.400"><path d="M0 1.500h26M0 11h26M0 20.500h26" /></Svg></Cell>
      </Toolbar>

      <Bookmarks>
        {bookmarks.map(b => <Bookmark key={b.t} $w={b.w}>{b.i}<Ui>{b.t}</Ui></Bookmark>)}
        <Bookmark $w={57}><Svg $w={22} viewBox="0 0 22 22" fill="none" stroke="#5e6d76" strokeWidth="2.600"><path d="m2 3 7 8-7 8M12 3l7 8-7 8" /></Svg></Bookmark>
        <Bookmark $w={30}><VLine $h={32} $c="#dfe3e6" /></Bookmark>
        <Bookmark $w={200}><Svg viewBox="0 0 32 32"><path fill="#c69c36" d="M1 3h11l3 4v6H1z" /><path fill="#efcb5c" stroke="#d6ab3e" d="M1 8h29v18a2 2 0 0 1-2 2H3a2 2 0 0 1-2-2Z" /></Svg><Ui>All Bookmarks</Ui></Bookmark>
      </Bookmarks>

      <Page>
        <Console>
          <Nav>
            <Cell $ml={36} $w={97}>
              <Svg $w={62} $h={40} viewBox="0 0 62 40"><text x="1" y="20" fontSize="33" fontWeight="500" fill="#fff" textLength="58" lengthAdjust="spacingAndGlyphs" fontFamily="Noto Sans">aws</text><path fill="#eb9f35" d="M0 26c18 11 38 11 55 3 2-1 3 1 1 2C40 43 17 41 0 28Z" /><path fill="#eb9f35" d="M50 25c5-2 11-2 12-1s0 8-4 12c-1 0-1 0-.5-1.500 1-3 2-6 1-7.500-1-1-4-1-8 0-1 0-1-1-.5-2Z" /></Svg>
            </Cell>
            <VLine $h={44} $c="#434a56" />
            <Cell $ml={33}><Svg viewBox="0 0 32 32" fill="#fff">{[0, 12, 24].map(y => [0, 12, 24].map(x => <rect key={`${x}-${y}`} x={x} y={y} width="8" height="8" rx="1.500" />))}</Svg></Cell>
            <NavText $ml={16}>Services</NavText>
            <NavSearch><Mag c="#d5dbdb" w={31} /><Italic $ml={18}>Search</Italic><Spacer />[Alt+S]</NavSearch>
            <Cell $ml={951}><Shell /></Cell>
            <VLine $h={44} $c="#434a56" $ml={32} />
            <Cell $ml={33}><Stroke c="#fff"><path strokeLinejoin="round" d="M1.500 11.700h13L12 9V6.500C12 3.500 10 1.700 8 1.700S4 3.500 4 6.500V9Z" /><path d="M6.200 12v1.200c0 2.500 3.600 2.500 3.600 0V12M8 0v2" /></Stroke></Cell>
            <VLine $h={48} $c="#434a56" $ml={34} />
            <Cell $ml={32}><Stroke c="#fff"><circle cx="8" cy="8" r="7" /><path d="M5.600 6.300c0-3.200 5-3 4.800 0C10.200 8 8 7.900 8 10M8 11v2" /></Stroke></Cell>
            <VLine $h={44} $c="#434a56" $ml={32} />
            <Cell $ml={34}><Gear c="#fff" /></Cell>
            <VLine $h={44} $c="#434a56" $ml={32} />
            <NavText $ml={34}>Global</NavText><Cell $ml={12}><Caret w={17} c="#fff" /></Cell>
            <VLine $h={44} $c="#434a56" $ml={36} />
            <NavText $ml={33}>SapientSwarm</NavText><Cell $ml={12}><Caret w={17} c="#fff" /></Cell>
          </Nav>
          <Middle>
            <Side>
              <SideHead><SideTitle>Identity and Access Management (IAM)</SideTitle><Cell><Svg $w={26} $h={44} viewBox="0 0 26 44" stroke={slate} strokeWidth="3.400"><path d="m1 10 24 24M25 10 1 34" /></Svg></Cell></SideHead>
              <SideSearch><Field $w={398}><Mag /><Italic $ml={18}>Search IAM</Italic></Field></SideSearch>
              <SideRule $mt={48} />
              <SideItem $mt={38}>Dashboard</SideItem>
              <SideGroup $mt={24}><Caret />Access management</SideGroup>
              {nav1.map((t, i) => <SideItem key={t} $on={t === 'Roles'} $mt={i ? 0 : 3}>{t}</SideItem>)}
              <SideGroup $mt={24}><Caret />Access reports</SideGroup>
              {nav2.map(([t, d], i) => <SideItem key={t} $deep={d} $mt={i ? 0 : 2}>{t}</SideItem>)}
              <SideRule $mt={40} />
              <Related>Related consoles</Related>
            </Side>
            <Track><ScrollTri up c="#a3a3a3" /><Thumb $h={1311} /><Spacer /><ScrollTri c="#505050" /></Track>
            <Main>
              <Crumbs>
                <CrumbLink>IAM</CrumbLink><Cell $ml={22}><Chev w={19} h={30} /></Cell>
                <Cell $ml={23}><CrumbLink>Roles</CrumbLink></Cell><Cell $ml={22}><Chev w={19} h={30} /></Cell>
                <Cell $ml={24}><CrumbHere>LambdaS3Access</CrumbHere></Cell>
              </Crumbs>
              <TitleRow><H1>LambdaS3Access</H1><Info $mt={20}>Info</Info><Spacer /><Button $w={172} $mt={9}>Delete</Button></TitleRow>
              <Desc>Allows Lambda functions to call AWS services on your behalf.</Desc>
              <Card $h={425} $mt={44}>
                <CardHead><H2 $up={7}>Summary</H2><Spacer /><Button $w={138} $mb={3}>Edit</Button></CardHead>
                <Columns>
                  <Column>
                    <Label>Creation date</Label><Value $wide>July 13, 2024, 16:23 (UTC+03:00)</Value>
                    <Label $mt={36}>Last activity</Label><Value>-</Value>
                  </Column>
                  <Column $line>
                    <Label>ARN</Label>
                    <Value><Cell $ml={9} $w={43}><Stroke w={28}><path d="M1.200 5h8.600v10H1.200zM5.500 5V1.200H15V11H10" /></Stroke></Cell>arn:aws:iam::838751353132:role/LambdaS3Access</Value>
                    <Label $mt={36}>Maximum session duration</Label><Value>1 hour</Value>
                  </Column>
                </Columns>
              </Card>
              <Tabs>
                <Tab $w={235} $on>Permissions</Tab><TabRule /><Tab $w={328}>Trust relationships</Tab><TabRule /><Tab $w={142}>Tags</Tab><TabRule />
                <Tab $w={273}>Access Advisor</Tab><TabRule /><Tab $w={293}>Revoke sessions</Tab>
              </Tabs>
              <Card $h={559} $mt={33}>
                <PolicyTop>
                  <Row $gap={16}>
                    <Row><H2>Permissions policies</H2><Count>(2)</Count><Info $mt={3}>Info</Info></Row>
                    <Spacer />
                    <Button $w={100}><Stroke w={34}><path d="M13.800 5.500A6.300 6.300 0 1 0 14.300 8.500M14 1v5H9.500" /></Stroke></Button>
                    <Button $w={246}>Simulate<External /></Button>
                    <Button $w={191} $off>Remove</Button>
                    <Button $w={349} $gap={20}>Add permissions<Caret w={21} /></Button>
                  </Row>
                  <Sub>You can attach up to 10 managed policies.</Sub>
                  <FilterLabel>Filter by Type</FilterLabel>
                  <Filters>
                    <Field $w={1004}><Mag /><Italic $ml={18}>Search</Italic></Field>
                    <Select $w={502}>All types<Caret /></Select>
                    <Cell $ml={533}><Chev left c="#aab7b8" w={19} h={30} /></Cell>
                    <Cell $ml={38} $w={15}><b>1</b></Cell>
                    <Cell $ml={39}><Chev c="#aab7b8" w={19} h={30} /></Cell>
                    <VLine $h={64} $c="#eaeded" $ml={28} />
                    <Cell $ml={25}><Gear /></Cell>
                  </Filters>
                </PolicyTop>
                <Table>
                  <Tr $head>
                    <Th $rule="#eaeded"><Check /></Th>
                    <Th $on $pl={39} $rule={muted}><Cell $mb={5}>Policy name</Cell><Cell $ml={11}><External c={ink} w={28} /></Cell><Spacer /><Cell><Caret c={ink} up /></Cell><Cell $w={28} /></Th>
                    <Th $rule={muted}><Cell $mb={2}>Type</Cell><Spacer /><Caret hollow c={muted} /><Cell $w={28} /></Th>
                    <Th><Cell $mb={2}>Attached entities</Cell><Spacer /><Caret hollow c={muted} /><Cell $w={28} /></Th>
                  </Tr>
                  <Tr>
                    <Td><Check /></Td><Td $pl={49}><Plus /><Cell $ml={42} $w={38} $mb={8}><Cube /></Cell><Link>AWSLambdaExecute</Link></Td><Td>AWS managed</Td><Td><Dashed>1</Dashed></Td>
                  </Tr>
                  <Tr>
                    <Td><Check /></Td><Td $pl={49}><Plus /><Cell $ml={42} /><Link $ls={-0.006}>S3GetObjectPolicy</Link></Td><Td>Customer inline</Td><Td>0</Td>
                  </Tr>
                </Table>
              </Card>
              <Card $h={200} $mt={41}><CardHead /></Card>
            </Main>
            <Rail>
              <RailBtn $h={82} $line><Stroke><circle cx="8" cy="8" r="7" /><path d="M8 3.800v2M6.200 7.500H8v4M6 11.500h4" /></Stroke></RailBtn>
              <RailBtn $h={80}><Stroke w={31}><path d="M8 1 14 4.500v7L8 15l-6-3.500v-7ZM8.500 8.500l4.500 3" /><circle cx="8" cy="8" r="1.600" fill={slate} /></Stroke></RailBtn>
            </Rail>
          </Middle>
          <Footer>
            <Shell /><FootText $ml={10} $ls={-0.018}>CloudShell</FootText><FootText $ml={50} $ls={-0.024}>Feedback</FootText><Spacer />
            <FootText $ml={0} $ls={-0.023}>© 2024, Amazon Web Services, Inc. or its affiliates.</FootText><FootText $ml={60} $ls={-0.022}>Privacy</FootText><FootText $ml={50}>Terms</FootText><FootText $ml={50}>Cookie preferences</FootText>
          </Footer>
        </Console>
        <Track><ScrollTri up c="#a3a3a3" /><Thumb $h={1158} /><Spacer /><ScrollTri c="#505050" /></Track>
      </Page>

      <Taskbar>
        {tasks.map((t, i) => <Task key={i} $on={t.on}>{t.i}{(t.dot || t.on) && <Dot $on={t.on} />}</Task>)}
        <Tray>
          <Cell $ml={138}><Svg $w={20} $h={14} viewBox="0 0 20 14" fill="none" stroke="#1b1a1a" strokeWidth="2.400"><path d="m0 12 10-10 10 10" /></Svg></Cell>
          <Stack $w={60} $ml={36}><span>ENG</span><span>US</span></Stack>
          <Cell $ml={29}><Svg $w={34} $h={26} viewBox="0 0 34 26" fill="none" stroke="#1b1a1a" strokeWidth="2.300"><path d="M1 10c9-10 23-10 32 0M6 15c6-7 16-7 22 0M11 19.500c4-4 8-4 12 0" /><circle cx="17" cy="23" r="2.600" fill="#1b1a1a" stroke="none" /></Svg></Cell>
          <Cell $ml={14}><Svg $w={34} $h={28} viewBox="0 0 34 28" fill="none" stroke="#1b1a1a" strokeWidth="2.200"><path d="M1.200 9h5L13 3v22l-7-6H1.200ZM17 10c2 2 2 6 0 8M21 6c4 4 4 12 0 16" /><path d="M26 2c6 6 6 18 0 24" stroke="#b8adaa" /></Svg></Cell>
          <Cell $ml={14}><Svg $w={33} $h={28} viewBox="0 0 33 28"><path d="M12 5.500h12a4 4 0 0 1 4 4v11a4 4 0 0 1-4 4H6a4 4 0 0 1-4-4V15" fill="none" stroke="#1b1a1a" strokeWidth="2.200" /><path fill="#1b1a1a" d="M12 9h12v12H5l1-4h2ZM30 11h3v7h-3ZM7-1 1 9h4l-2 8 8-10H7l3-8Z" /></Svg></Cell>
          <Stack $w={150} $ml={-7} $right><span>7:45 am</span><span>16/7/2024</span></Stack>
          <Cell $ml={18}><Svg $w={28} $h={30} viewBox="0 0 28 30"><path fill="#1b1a1a" d="M0 24 3 19V9c0-5 4-9 9-9 4 0 8 4 8 9v10l5 5ZM7 26h10c-2 5-8 5-10 0Z" /><path d="M17 1h8l-8 9h9" fill="none" stroke="#e8d8d5" strokeWidth="5" /><path d="M18 1h7l-7 8h8" fill="none" stroke="#1b1a1a" strokeWidth="2" /><path d="M8 11h6l-6 7h6" fill="none" stroke="#e8d8d5" strokeWidth="2" /></Svg></Cell>
        </Tray>
      </Taskbar>
    </Screen>
  );
}
